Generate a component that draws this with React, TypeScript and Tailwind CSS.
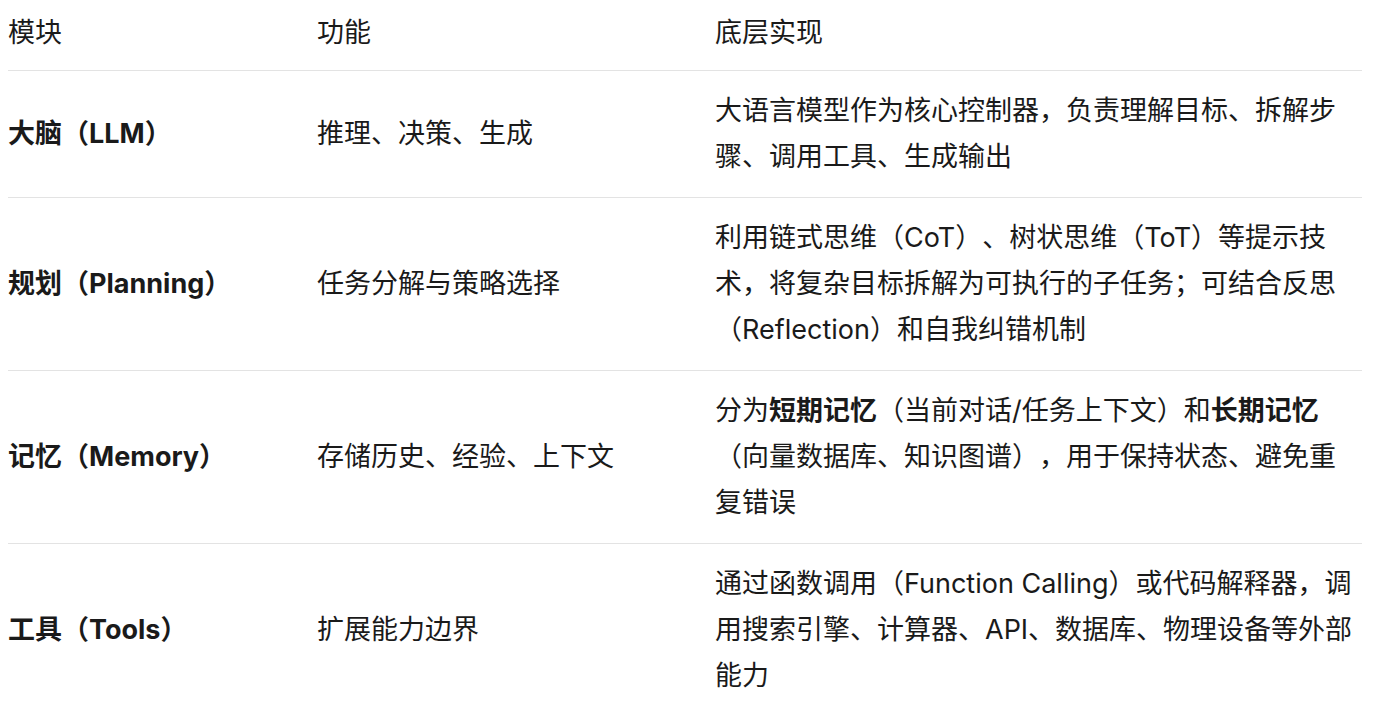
import React from "react";

const rows: { name: string; func: string; impl: React.ReactNode }[] = [
  {
    name: "大脑（LLM）",
    func: "推理、决策、生成",
    impl: "大语言模型作为核心控制器，负责理解目标、拆解步骤、调用工具、生成输出",
  },
  {
    name: "规划（Planning）",
    func: "任务分解与策略选择",
    impl: "利用链式思维（CoT）、树状思维（ToT）等提示技术，将复杂目标拆解为可执行的子任务；可结合反思（Reflection）和自我纠错机制",
  },
  {
    name: "记忆（Memory）",
    func: "存储历史、经验、上下文",
    impl: (
      <>
        分为<strong className="font-bold">短期记忆</strong>（当前对话/任务上下文）和
        <strong className="font-bold">长期记忆</strong>（向量数据库、知识图谱），用于保持状态、避免重复错误
      </>
    ),
  },
  {
    name: "工具（Tools）",
    func: "扩展能力边界",
    impl: "通过函数调用（Function Calling）或代码解释器，调用搜索引擎、计算器、API、数据库、物理设备等外部能力",
  },
];

export default function App() {
  return (
    <div
      className="w-[1373px] h-[712px] overflow-hidden bg-white text-[#1a1a1a] [text-spacing-trim:space-all]"
      style={{ fontFamily: '"Inter", "Noto Sans CJK SC", sans-serif' }}
    >
      <div className="ml-[8px] mr-[11px] text-[27px] leading-[46px]">
        <div className="grid grid-cols-[309px_398px_1fr] border-b border-[#e3e3e3] pt-[10px] pb-[14px]">
          <div>模块</div>
          <div>功能</div>
          <div className="pr-[6px]">底层实现</div>
        </div>
        {rows.map((r, i) => (
          <div
            key={i}
            className="grid grid-cols-[309px_398px_1fr] items-center border-b border-[#e3e3e3] py-[17px]"
          >
            <div className="font-bold">{r.name}</div>
            <div>{r.func}</div>
            <div className="pr-[6px]">{r.impl}</div>
          </div>
        ))}
      </div>
    </div>
  );
}
